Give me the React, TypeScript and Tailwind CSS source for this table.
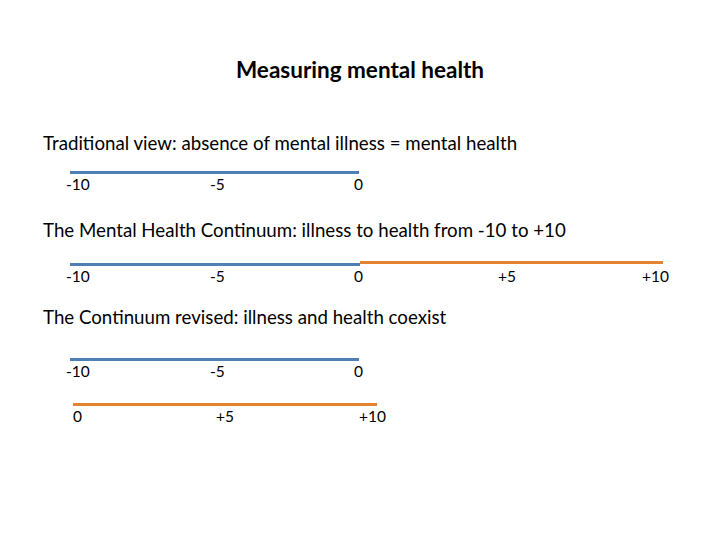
const BLUE = 'bg-[#4f7fb3]'

function Labels({ items, offset }: { items: string[]; offset: 'a' | 'b' }) {
  return (
    <div
      className={`flex mt-[1px] text-[15.5px] leading-[18px] text-black ${offset === 'a' ? 'ml-[66px]' : 'ml-[73px]'}`}
    >
      {items.map((label) => (
        <div key={label} className={`shrink-0 ${offset === 'a' ? 'w-[144px]' : 'w-[143px]'}`}>
          {label}
        </div>
      ))}
    </div>
  )
}

export default function App() {
  return (
    <div className="w-[720px] h-[540px] bg-white text-black font-['Lato','Liberation_Sans',sans-serif] overflow-hidden">
      <h1 className="pt-[57px] text-center text-[22.5px] leading-[26px] font-bold">
        Measuring mental health
      </h1>

      {/* Traditional view */}
      <p className="mt-[49px] ml-[43px] text-[18.7px] leading-[22px]">
        Traditional view: absence of mental illness = mental health
      </p>
      <div className={`mt-[17px] ml-[70px] w-[289px] h-[3px] ${BLUE}`} />
      <Labels items={['-10', '-5', '0']} offset="a" />

      {/* Continuum */}
      <p className="mt-[26px] ml-[43px] text-[18.7px] leading-[22px]">
        The Mental Health Continuum: illness to health from -10 to +10
      </p>
      <div className="mt-[20px] ml-[70px] flex items-start">
        <div className={`mt-[2px] w-[290px] h-[3px] ${BLUE}`} />
        <div className="w-[303px] h-[3px] bg-[#e5822f]" />
      </div>
      <Labels items={['-10', '-5', '0', '+5', '+10']} offset="a" />

      {/* Revised */}
      <p className="mt-[21px] ml-[43px] text-[18.7px] leading-[22px]">
        The Continuum revised: illness and health coexist
      </p>
      <div className={`mt-[30px] ml-[70px] w-[289px] h-[3px] ${BLUE}`} />
      <Labels items={['-10', '-5', '0']} offset="a" />
      <div className="mt-[23px] ml-[73px] w-[304px] h-[3px] bg-[#e5822f]" />
      <Labels items={['0', '+5', '+10']} offset="b" />
    </div>
  )
}
